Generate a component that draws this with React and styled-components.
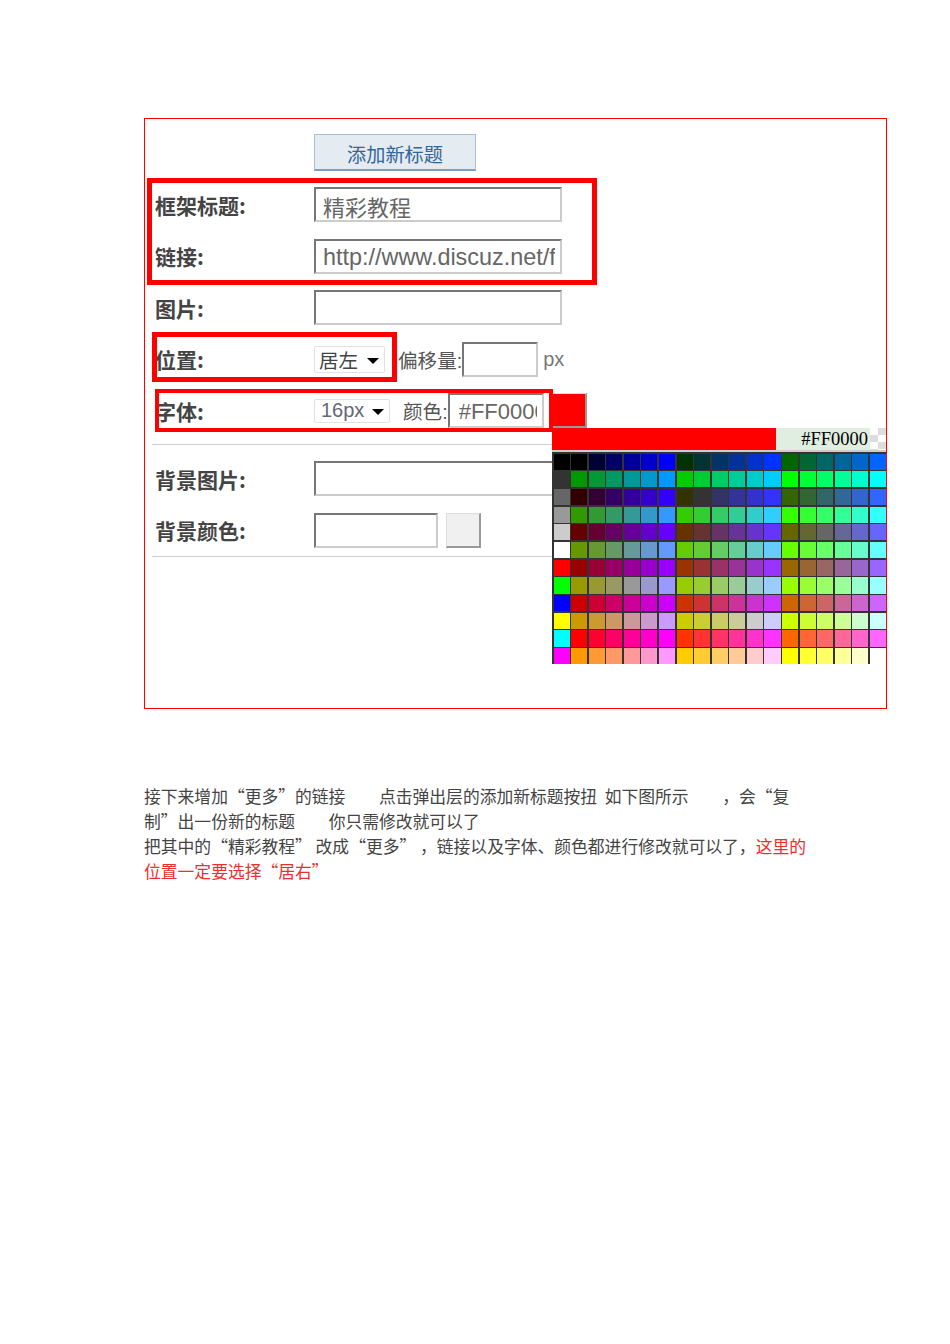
import styled, { createGlobalStyle } from "styled-components";

const cjk = '"Noto Sans CJK SC", sans-serif';
const latin = '"Liberation Sans", "Noto Sans CJK SC", sans-serif';

const GlobalStyle = createGlobalStyle`
  html, body {
    margin: 0;
    background: #fff;
  }
`;

const Page = styled.div`
  box-sizing: border-box;
  height: 1344px;
  padding: 118px 0 0 144px;
  overflow: hidden;
`;

const Frame = styled.div`
  position: relative;
  box-sizing: border-box;
  width: 743px;
  height: 591px;
  padding: 15px 0 0 10px;
  border: 1px solid #f00;
  overflow: hidden;
`;

const AddRow = styled.div`
  padding-left: 159px;
  margin-bottom: 16px;
`;

const AddButton = styled.button`
  box-sizing: border-box;
  width: 162px;
  height: 37px;
  padding: 3px 0 0;
  border: 1px solid #a9bfd6;
  border-bottom: 2px solid #7f9fc0;
  background: #e4ebf1;
  color: #336699;
  font: 400 19.2px ${cjk};
`;

const Fields = styled.div`
  display: flex;
  flex-direction: column;
  gap: 16.5px;
`;

const Row = styled.div`
  display: grid;
  grid-template-columns: 159px 1fr;
  align-items: center;
  height: 35px;
`;

const Label = styled.span`
  color: #444;
  font: 700 21px ${cjk};
  white-space: nowrap;
`;

const Controls = styled.div`
  display: flex;
  align-items: center;
`;

const Input = styled.input`
  box-sizing: border-box;
  flex: none;
  width: ${(p) => p.$width || 248}px;
  height: 35px;
  padding: 2px 5px 0 ${(p) => p.$pad || 7}px;
  border-style: solid;
  border-width: 2px;
  border-color: #777 #ccc #ccc #777;
  background: #fff;
  color: #666;
  font: 400 ${(p) => p.$size || 22}px ${latin};
  outline: none;
`;

const Select = styled.div`
  box-sizing: border-box;
  display: flex;
  align-items: center;
  justify-content: space-between;
  flex: none;
  width: ${(p) => p.$width}px;
  height: ${(p) => p.$height}px;
  padding: 0 5px 0 ${(p) => p.$pad}px;
  border: 1px solid #e2e2e2;
  border-radius: 2px;
  color: ${(p) => p.$color};
  font: 400 ${(p) => p.$size}px ${latin};
`;

const Caret = styled.i`
  width: 0;
  height: 0;
  margin-top: 3px;
  border-style: solid;
  border-width: 6px 6px 0;
  border-color: #000 transparent transparent;
`;

const Caption = styled.span`
  flex: none;
  margin-left: ${(p) => p.$offset}px;
  color: ${(p) => p.$color || "#555"};
  font: 400 ${(p) => p.$size || 19.6}px ${latin};
  white-space: nowrap;
`;

const Swatch = styled.div`
  box-sizing: border-box;
  flex: none;
  width: 35px;
  height: 35px;
  margin-left: ${(p) => p.$offset}px;
  border-style: solid;
  border-width: 1px 2px 2px 1px;
  border-color: #ddd #999 #999 #ddd;
  background: ${(p) => p.$color};
`;

const Divider = styled.hr`
  width: 400px;
  height: 1px;
  margin: ${(p) => p.$margin};
  border: 0;
  background: #ccc;
`;

const Annotation = styled.div`
  position: absolute;
  box-sizing: border-box;
  left: ${(p) => p.$x - 145}px;
  top: ${(p) => p.$y - 119}px;
  width: ${(p) => p.$w}px;
  height: ${(p) => p.$h}px;
  border: ${(p) => p.$border || 5}px solid #f00;
  pointer-events: none;
`;

const Palette = styled.div`
  position: absolute;
  left: 407px;
  top: 309px;
  width: 334px;
  background: #333;
`;

const PaletteHead = styled.div`
  display: grid;
  grid-template-columns: 224px 94px 16px;
  height: 20px;
  border-bottom: 4px solid #ccc;
`;

const PaletteCurrent = styled.div`
  background: #f00;
`;

const PaletteValue = styled.div`
  padding-right: 2px;
  background: #dfeee0;
  color: #000;
  font: 400 18.5px/22px "Liberation Serif", serif;
  text-align: right;
`;

const PaletteClose = styled.div`
  background: conic-gradient(#ddd 25%, #fff 0 50%, #ddd 0 75%, #fff 0) 0 0 / 16px 14px;
`;

const PaletteGrid = styled.div`
  display: grid;
  grid-template-columns: repeat(19, 1fr);
  grid-auto-rows: 16.2px;
  gap: 1.5px;
  padding: 1.5px 0 0 1.5px;
`;

const Cell = styled.div`
  background: ${(p) => p.$color};
`;

const Notes = styled.p`
  width: 680px;
  margin: 75px 0 0;
  color: #444;
  font: 400 16.8px/25px ${cjk};
  white-space: pre;
`;

const Warning = styled.span`
  color: #e83030;
`;

const greys = ["#000000", "#333333", "#666666", "#999999", "#cccccc", "#ffffff", "#ff0000", "#00ff00", "#0000ff", "#ffff00", "#00ffff", "#ff00ff"];

const hex = (n) => (n * 0x33).toString(16).padStart(2, "0");

const paletteCells = greys.flatMap((grey, row) => {
  const red = Math.floor(row / 2);
  const cells = [grey];
  for (let block = 0; block < 3; block++) {
    const green = block + (row % 2) * 3;
    for (let blue = 0; blue < 6; blue++) {
      cells.push(`#${hex(red)}${hex(green)}${hex(blue)}`);
    }
  }
  return cells;
});

export default function App() {
  return (
    <Page>
      <GlobalStyle />
      <Frame>
        <AddRow>
          <AddButton>添加新标题</AddButton>
        </AddRow>
        <Fields>
          <Row>
            <Label>框架标题:</Label>
            <Controls>
              <Input defaultValue="精彩教程" />
            </Controls>
          </Row>
          <Row>
            <Label>链接:</Label>
            <Controls>
              <Input $size={23.4} defaultValue="http://www.discuz.net/forum" />
            </Controls>
          </Row>
          <Row>
            <Label>图片:</Label>
            <Controls>
              <Input />
            </Controls>
          </Row>
          <Row>
            <Label>位置:</Label>
            <Controls>
              <Select $width={71} $height={27} $pad={4} $size={19.5} $color="#444">
                居左
                <Caret />
              </Select>
              <Caption $offset={13}>偏移量:</Caption>
              <Input $width={76} />
              <Caption $offset={5} $size={20} $color="#777">px</Caption>
            </Controls>
          </Row>
          <Row>
            <Label>字体:</Label>
            <Controls>
              <Select $width={76} $height={24} $pad={6} $size={20} $color="#667">
                16px
                <Caret />
              </Select>
              <Caption $offset={13}>颜色:</Caption>
              <Input $width={96} $pad={9} defaultValue="#FF0000" />
              <Swatch $offset={8} $color="#f00" />
            </Controls>
          </Row>
        </Fields>
        <Divider $margin="16px 0 16px -3px" />
        <Fields>
          <Row>
            <Label>背景图片:</Label>
            <Controls>
              <Input />
            </Controls>
          </Row>
          <Row>
            <Label>背景颜色:</Label>
            <Controls>
              <Input $width={124} />
              <Swatch $offset={8} $color="#f0f0f0" />
            </Controls>
          </Row>
        </Fields>
        <Divider $margin="8px 0 0 -3px" />

        <Annotation $x={147} $y={178} $w={450} $h={107} />
        <Annotation $x={152} $y={332} $w={245} $h={50} />
        <Annotation $x={155} $y={389} $w={398} $h={43} $border={4} />

        <Palette>
          <PaletteHead>
            <PaletteCurrent />
            <PaletteValue>#FF0000</PaletteValue>
            <PaletteClose />
          </PaletteHead>
          <PaletteGrid>
            {paletteCells.map((color, idx) => (
              <Cell key={idx} $color={color} />
            ))}
          </PaletteGrid>
        </Palette>
      </Frame>
      <Notes>
        接下来增加“更多”的链接{"\u3000\u3000"}点击弹出层的添加新标题按扭{"  "}如下图所示{"\u3000\u3000"}，会“复
        <br />
        制”出一份新的标题{"\u3000\u3000"}你只需修改就可以了
        <br />
        把其中的“精彩教程” 改成“更多” ，链接以及字体、颜色都进行修改就可以了，<Warning>这里的</Warning>
        <br />
        <Warning>位置一定要选择“居右”</Warning>
      </Notes>
    </Page>
  );
}
